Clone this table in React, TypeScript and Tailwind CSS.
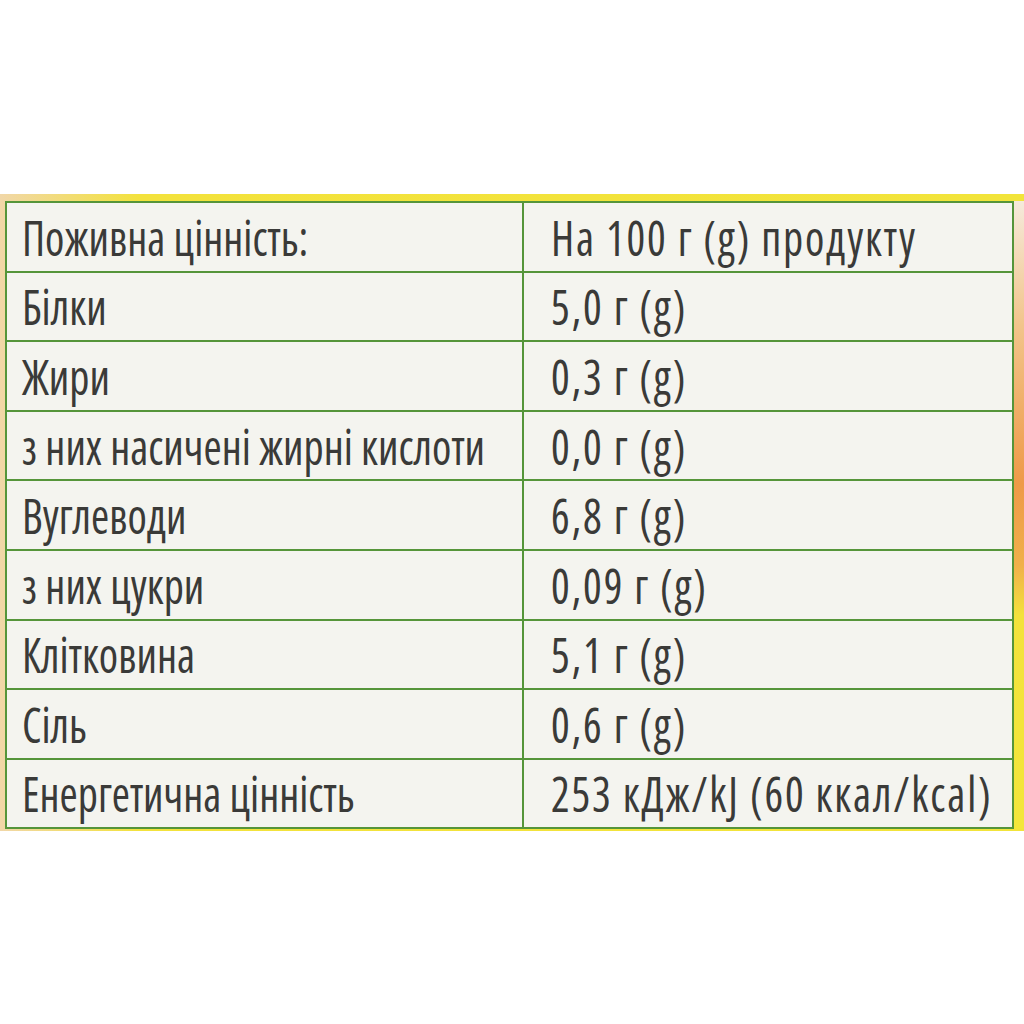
const rows: [string, string][] = [
  ['Поживна цінність:', 'На 100 г (g) продукту'],
  ['Білки', '5,0 г (g)'],
  ['Жири', '0,3 г (g)'],
  ['з них насичені жирні кислоти', '0,0 г (g)'],
  ['Вуглеводи', '6,8 г (g)'],
  ['з них цукри', '0,09 г (g)'],
  ['Клітковина', '5,1 г (g)'],
  ['Сіль', '0,6 г (g)'],
  ['Енергетична цінність', '253 кДж/kJ (60 ккал/kcal)'],
]

function Cell({ text, first }: { text: string; first?: boolean }) {
  return (
    <div
      className={
        first
          ? 'flex h-full min-w-0 items-center overflow-hidden pl-[15px]'
          : 'flex h-full min-w-0 items-center overflow-hidden pl-[27px]'
      }
    >
      <span
        className={
          first
            ? 'block origin-left scale-x-[0.88] whitespace-nowrap text-[50px] leading-none font-[380] font-stretch-condensed text-[#3a3a38]'
            : 'block origin-left scale-x-[0.88] whitespace-nowrap text-[50px] leading-none font-[380] tracking-[2.1px] font-stretch-condensed text-[#3a3a38]'
        }
      >
        {text}
      </span>
    </div>
  )
}

export default function App() {
  return (
    <div className="flex h-screen flex-col bg-white pt-[194px] font-['Open_Sans',sans-serif]">
      <div className="flex bg-[linear-gradient(90deg,#f1d7a8_0px,#f3e23c_140px,#f2e43a_100%)] pt-[7px] pb-[2px] pl-[5px]">
        <div className="flex min-w-0 flex-1 flex-col border-2 border-[#55953a] bg-[#f4f4ef]">
          {rows.map(([label, value], i) => (
            <div
              key={label}
              className={
                i === rows.length - 1
                  ? 'grid h-[67px] grid-cols-[517px_minmax(0,1fr)]'
                  : 'grid h-[69.6px] grid-cols-[517px_minmax(0,1fr)] border-b-2 border-[#55953a]'
              }
            >
              <div className="min-w-0 border-r-2 border-[#55953a]">
                <Cell text={label} first />
              </div>
              <Cell text={value} />
            </div>
          ))}
        </div>
        <div className="w-[10px] shrink-0 bg-[linear-gradient(180deg,#f5eadb_0%,#f2c48a_20%,#ee9a48_45%,#f0b04a_58%,#f3e23c_66%,#f3e63a_100%)]" />
      </div>
    </div>
  )
}
